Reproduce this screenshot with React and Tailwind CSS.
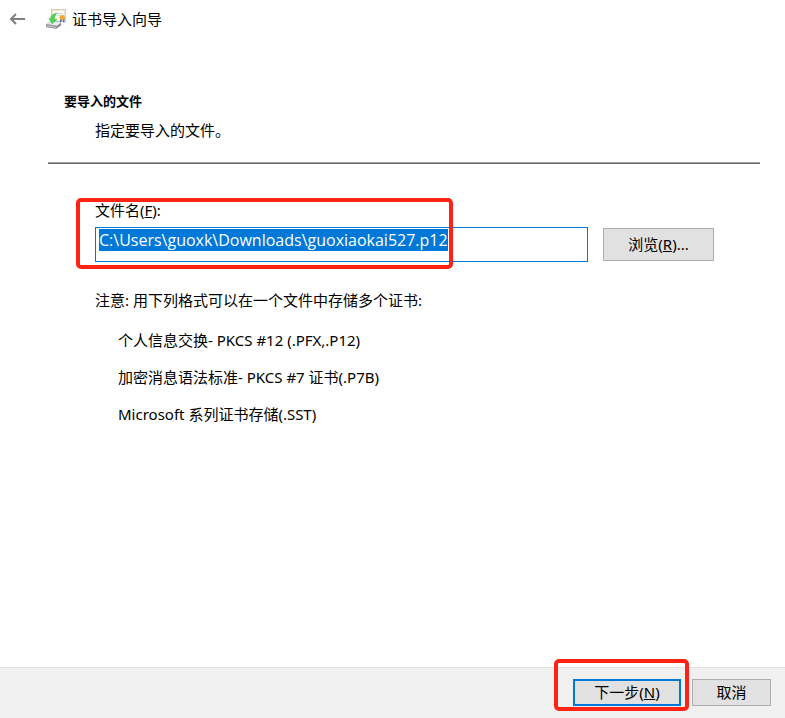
import React, { useEffect, useRef } from "react";

const formats = [
  "个人信息交换- PKCS #12 (.PFX,.P12)",
  "加密消息语法标准- PKCS #7 证书(.P7B)",
  "Microsoft 系列证书存储(.SST)",
];

function BackArrow() {
  return (
    <svg width="16" height="12" viewBox="0 0 16 12" fill="none" stroke="#808080" strokeWidth="2">
      <path d="M16 6H2M7 1L2 6l5 5" />
    </svg>
  );
}

function CertificateIcon() {
  return (
    <svg width="20" height="20" viewBox="0 0 20 20">
      {/* certificate */}
      <rect x="5.5" y="0.5" width="14" height="12" fill="#efe6d6" stroke="#d8cbb6" />
      <rect x="7" y="2" width="11" height="9" fill="#fcfbf9" />
      <path d="M11 4.5h5M12 6.5h2" stroke="#cfcfcf" />
      <path d="M14 9v5l1.600-1.300V9zM16.800 9v3.700l1.600 1.300V9z" fill="#3a7bd0" />
      <circle cx="16.2" cy="8.6" r="2.4" fill="#f3a92f" stroke="#e0951c" strokeWidth="0.5" />
      {/* drive */}
      <path d="M0.5 15.5l4-3h9l1.500 1.500-4.500 3.200z" fill="#e9ebec" stroke="#9da1a4" strokeWidth="0.6" />
      <path d="M0.5 15.5l10 1.700v2.300l-10-1.600z" fill="#b9bdc0" stroke="#777b7f" strokeWidth="0.6" />
      <path d="M10.5 17.200l4.500-3.200v2.500l-4.500 3z" fill="#85898d" />
      {/* import arrow */}
      <path d="M10.800 4.200C7 4.600 5 6.500 4.700 9.500H3l3.200 5.200 4.600-4.400H8.300c0-2 .8-4 2.500-6.100z" fill="#4cd64f" stroke="#2db338" strokeWidth="0.5" />
    </svg>
  );
}

export default function App() {
  const fileRef = useRef(null);

  // The path starts out selected
  useEffect(() => {
    fileRef.current.focus();
    fileRef.current.select();
  }, []);

  return (
    <div className="flex min-h-screen flex-col bg-white font-['Noto_Sans','Noto_Sans_CJK_SC',sans-serif] text-[15px] leading-5 text-black">
      <header className="flex h-[38px] items-center pl-[9px]">
        <button type="button" aria-label="返回" className="mr-[21px]">
          <BackArrow />
        </button>
        <CertificateIcon />
        <h1 className="ml-[6px]">证书导入向导</h1>
      </header>

      <main className="flex-1 pt-[53px]">
        <div className="pl-16">
          <h2 className="text-[13px] font-bold">要导入的文件</h2>
          <p className="mt-[9px] pl-[31px]">指定要导入的文件。</p>
        </div>
        <hr className="mt-[22px] mr-[25px] ml-12 h-[2px] border-0 border-t border-t-[#a0a0a0] bg-[#696969]" />

        <section className="mt-9 pr-[71px] pl-[95px]">
          <div className="relative">
            <label htmlFor="file" className="block">
              文件名(<u>F</u>):
            </label>
            <div className="mt-[7px] flex items-center gap-[15px]">
              <input
                id="file"
                ref={fileRef}
                type="text"
                defaultValue="C:\Users\guoxk\Downloads\guoxiaokai527.p12"
                className="h-[35px] min-w-0 flex-1 border border-[#0078d7] bg-white px-[3px] pt-[2px] pb-3 font-['Open_Sans','Noto_Sans_CJK_SC',sans-serif] text-base leading-5 outline-none selection:bg-[#0078d7] selection:text-white"
              />
              <button type="button" className="h-[33px] w-[111px] border border-[#adadad] bg-[#e1e1e1] pb-[2px]">
                浏览(<u>R</u>)...
              </button>
            </div>
            <div className="pointer-events-none absolute -top-[2px] -left-[19px] h-[71px] w-[377px] rounded-[5px] border-4 border-[#ff2314]" />
          </div>

          <p className="mt-7">注意: 用下列格式可以在一个文件中存储多个证书:</p>
          <ul className="mt-5 flex flex-col gap-[17px] pl-[23px]">
            {formats.map((format) => (
              <li key={format}>{format}</li>
            ))}
          </ul>
        </section>
      </main>

      <footer className="flex h-[51px] items-start justify-end gap-[11px] border-t border-[#dfdfdf] bg-[#f0f0f0] pt-[11px] pr-[14px]">
        <div className="relative">
          <button type="button" className="block h-[27px] w-[108px] border-2 border-[#0078d7] bg-[#e1e1e1] pb-[2px]">
            下一步(<u>N</u>)
          </button>
          <div className="pointer-events-none absolute -top-5 -left-[19px] h-[52px] w-[135px] rounded-[5px] border-4 border-[#ff2314]" />
        </div>
        <button type="button" className="h-[27px] w-[79px] border border-[#adadad] bg-[#e1e1e1] pb-[2px]">
          取消
        </button>
      </footer>
    </div>
  );
}
